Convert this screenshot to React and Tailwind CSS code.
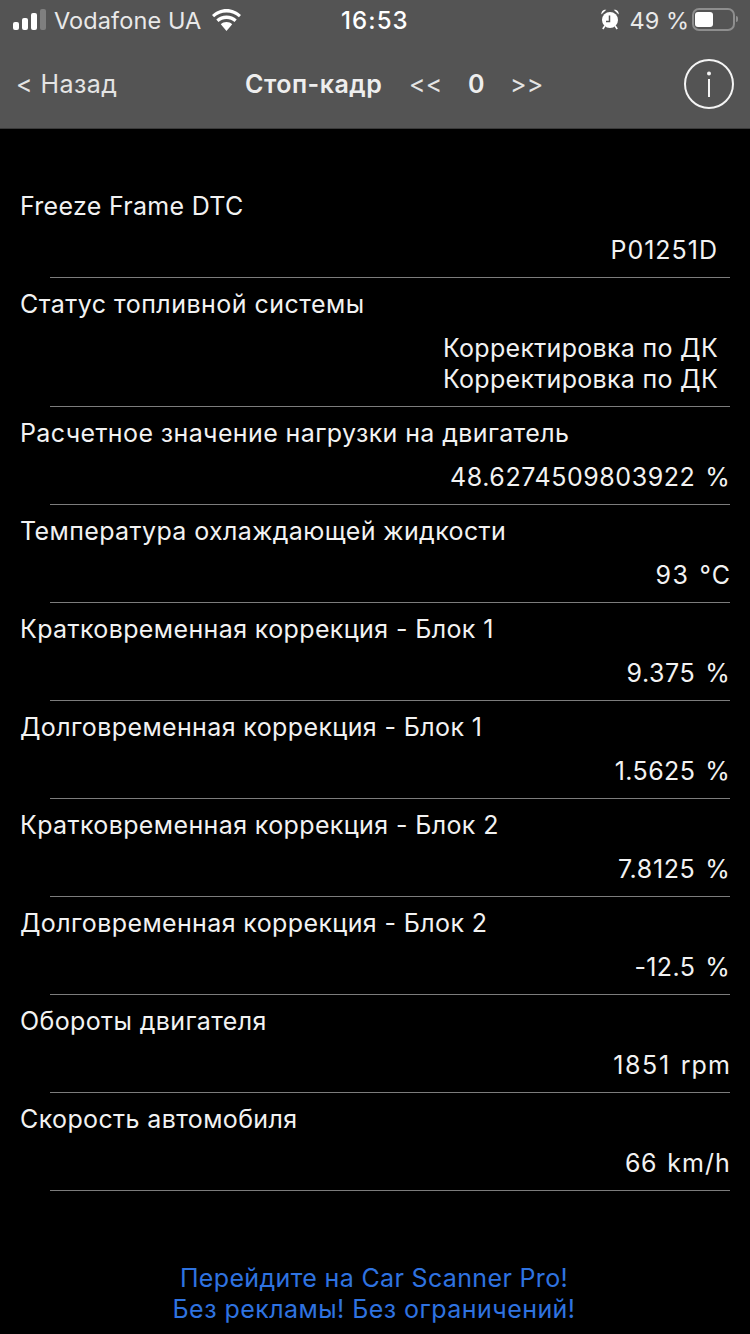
import React from 'react';

const rows = [
  { label: 'Расчетное значение нагрузки на двигатель', value: '48.6274509803922', unit: '%', valueClass: 'tracking-[0.56px]' },
  { label: 'Температура охлаждающей жидкости', value: '93', unit: '°C', valueClass: 'tracking-[1.5px]' },
  { label: 'Кратковременная коррекция - Блок 1', value: '9.375', unit: '%', valueClass: 'tracking-[0.56px]' },
  { label: 'Долговременная коррекция - Блок 1', value: '1.5625', unit: '%', valueClass: 'tracking-[0.4px]' },
  { label: 'Кратковременная коррекция - Блок 2', value: '7.8125', unit: '%', valueClass: 'tracking-[0.6px]' },
  { label: 'Долговременная коррекция - Блок 2', value: '-12.5', unit: '%', valueClass: 'tracking-[0.4px]' },
  { label: 'Обороты двигателя', value: '1851', unit: 'rpm', valueClass: 'tracking-[1.6px]' },
  { label: 'Скорость автомобиля', value: '66', unit: 'km/h', valueClass: 'tracking-[0.56px]' },
];

const Separator = () => <div className="ml-[50px] mr-[20px] h-px bg-[#7c7c7c]" />;

const SignalIcon = () => (
  <svg className="mb-[3px]" width="33" height="21" viewBox="0 0 33 21" fill="none">
    <rect x="0" y="13" width="6" height="8" rx="2" fill="#fff" />
    <rect x="9" y="9" width="6" height="12" rx="2" fill="#fff" />
    <rect x="18" y="4" width="6" height="17" rx="2" fill="#fff" />
    <rect x="27" y="0" width="6" height="21" rx="2" fill="#7f7f7f" />
  </svg>
);

const WifiIcon = () => (
  <svg className="mb-[3px]" width="29" height="22" viewBox="1.8 0 26.4 20" fill="none">
    <path d="M15 3.200c4.400 0 8.300 1.700 11.300 4.400l1.900-2.200C24.700 2.200 20.100 0 15 0S5.300 2.200 1.800 5.400l1.900 2.200C6.700 4.900 10.600 3.200 15 3.200z" fill="#fff" />
    <path d="M15 9c2.800 0 5.300 1.100 7.300 2.800l2-2.200C21.800 7.300 18.500 5.900 15 5.900s-6.800 1.400-9.300 3.700l2 2.200C9.700 10.100 12.200 9 15 9z" fill="#fff" />
    <path d="M15 11.900c-2 0-3.800.8-5.200 2L15 20l5.200-6.100c-1.400-1.200-3.200-2-5.200-2z" fill="#fff" />
  </svg>
);

const AlarmIcon = () => (
  <svg className="mb-[4px]" width="18" height="21" viewBox="0 0 18 21" fill="none">
    <circle cx="9" cy="11" r="8" fill="#fff" />
    <path d="M8.500 6.500v6H5" stroke="#545454" strokeWidth="1.500" fill="none" />
    <path d="M0.300 5.500C0 2.500 2.500 0.300 5.300 0.800z" fill="#fff" />
    <path d="M17.700 5.500C18 2.500 15.500 0.300 12.700 0.800z" fill="#fff" />
    <path d="M3.800 17l-2 3M14.200 17l2 3" stroke="#fff" strokeWidth="1.600" />
  </svg>
);

const Battery = () => (
  <div className="mb-[4px] flex items-center">
    <div className="flex h-[23px] w-[43px] items-center rounded-[7px] border-2 border-[#8e8e8e] py-[2px] pl-[1px]">
      <div className="h-full w-[18px] rounded-[3px] bg-white" />
    </div>
    <div className="ml-[1px] h-[6px] w-[2px] rounded-r-sm bg-[#8e8e8e]" />
  </div>
);

const InfoIcon = () => (
  <div className="flex h-[50px] w-[50px] items-center justify-center rounded-full border-2 border-[#f4f4f4]">
    <svg width="6" height="26" viewBox="0 0 6 26" fill="none">
      <circle cx="3" cy="2.500" r="2" fill="#f4f4f4" />
      <rect x="2" y="8" width="2" height="18" fill="#f4f4f4" />
    </svg>
  </div>
);

const App = () => {
  return (
    <div className="h-[1334px] w-[750px] overflow-hidden bg-black text-white font-['Inter','Noto_Sans',sans-serif]">
      <header className="h-[129px] border-b border-[#3a3a3a] bg-[#545454]">
        <div className="relative flex h-[40px] items-center pl-[13px] pr-[12px] pt-[2px] text-[24px]">
          <SignalIcon />
          <span className="ml-[8px] text-[23.5px] tracking-[0.1px] text-[#e9e9e9]">Vodafone UA</span>
          <span className="ml-[11px] flex"><WifiIcon /></span>
          <span className="absolute left-[341px] font-medium tracking-[1.1px]">16:53</span>
          <div className="ml-auto flex items-center">
            <AlarmIcon />
            <span className="ml-[11px] mr-[3px] text-[23.5px] text-[#e9e9e9]">49 %</span>
            <Battery />
          </div>
        </div>
        <div className="relative flex h-[88px] items-center pt-[1px] text-[25px]">
          <span className="ml-[16px] tracking-[0.45px] text-[#e4e4e4]">&lt; Назад</span>
          <span className="absolute left-[245px] font-semibold tracking-[0.5px] text-[#eeeeee]">Стоп-кадр</span>
          <span className="absolute left-[409px] tracking-[0.3px] text-[#e4e4e4]">&lt;&lt;</span>
          <span className="absolute left-[468px] font-semibold text-[#eeeeee]">0</span>
          <span className="absolute left-[510px] tracking-[0.3px] text-[#e4e4e4]">&gt;&gt;</span>
          <div className="absolute left-[684px] top-[19px]"><InfoIcon /></div>
        </div>
      </header>

      <main className="pt-[51px] text-[25px] leading-[31px] tracking-[0.38px] text-[#f2f2f2]">
        <section className="h-[98px]">
          <div className="flex h-[97px] flex-col">
            <div className="pl-[20px] pt-[11px] tracking-[0.3px]">Freeze Frame DTC</div>
            <div className="mt-[13px] pr-[32px] text-right tracking-[1px]">P01251D</div>
          </div>
          <Separator />
        </section>
        <section className="h-[129px]">
          <div className="flex h-[128px] flex-col">
            <div className="pl-[20px] pt-[11px] tracking-[0.46px]">Статус топливной системы</div>
            <div className="mt-[13px] pr-[32px] text-right tracking-[0.3px]">
              <div>Корректировка по ДК</div>
              <div>Корректировка по ДК</div>
            </div>
          </div>
          <Separator />
        </section>
        {rows.map((row) => (
          <section key={row.label} className="h-[98px]">
            <div className="flex h-[97px] flex-col">
              <div className="pl-[20px] pt-[11px]">{row.label}</div>
              <div className="mt-[13px] flex justify-end gap-[10px] pr-[19px]">
                <span className={row.valueClass}>{row.value}</span>
                <span className="tracking-[1.1px]">{row.unit}</span>
              </div>
            </div>
            <Separator />
          </section>
        ))}
        <footer className="mt-[72px] pr-[2px] text-center text-[#2f73e0]">
          <div className="tracking-[0.35px]">Перейдите на Car Scanner Pro!</div>
          <div className="tracking-[0.45px]">Без рекламы! Без ограничений!</div>
        </footer>
      </main>
    </div>
  );
};

export default App;
